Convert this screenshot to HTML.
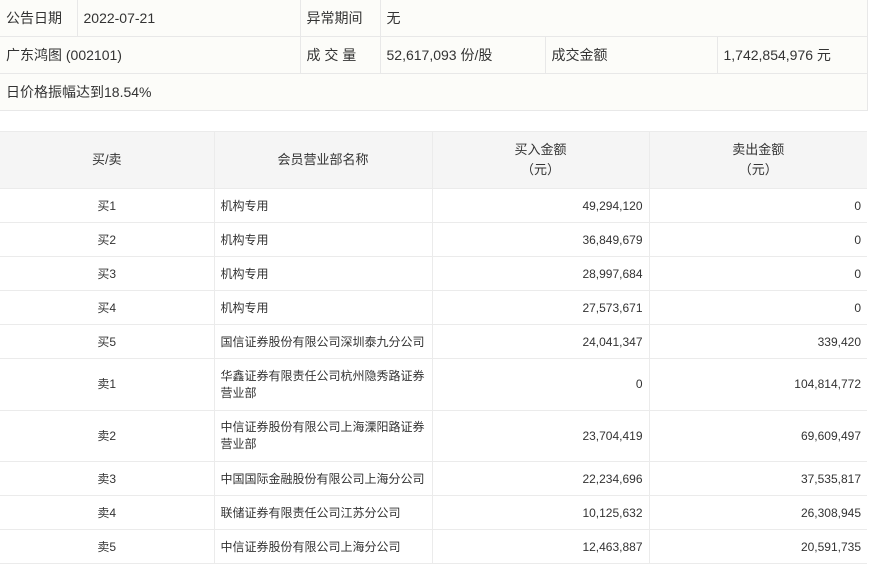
<!DOCTYPE html>
<html><head><meta charset="utf-8"><style>
body{margin:0;width:870px;height:565px;background:#fff;font-family:"Liberation Sans","Noto Sans CJK SC",sans-serif;color:#333;overflow:hidden;position:relative}
table{border-collapse:collapse;table-layout:fixed;position:absolute;left:0}
td{border:1px solid #e8e8e8;padding:0 6px;white-space:nowrap}
#t1{top:-1px;width:867px;background:#fcfcf9;font-size:14px}
#t1 td{height:36px}
#t1 td:first-child{border-left:none}
#t2{top:131px;width:867px;font-size:12px}
#t2 td{border-color:#ebebeb;padding:0 6px;height:33px}
#t2 tr.h td{background:#f5f5f5;height:56px;text-align:center;font-size:13px;line-height:20px}
#t2 tr.t td{height:50px;line-height:17px;white-space:normal}
#t2 tr.t1 td{height:51px}
#t2 td:first-child{border-left:none;text-align:center}
#t2 td:last-child{border-right:none}
.r{text-align:right}
</style></head><body>
<table id="t1">
<colgroup><col style="width:77px"><col style="width:223px"><col style="width:80px"><col style="width:165px"><col style="width:172px"><col style="width:150px"></colgroup>
<tr><td>公告日期</td><td>2022-07-21</td><td>异常期间</td><td colspan="3">无</td></tr>
<tr><td colspan="2">广东鸿图 (002101)</td><td>成 交 量</td><td>52,617,093 份/股</td><td>成交金额</td><td>1,742,854,976 元</td></tr>
<tr><td colspan="6">日价格振幅达到18.54%</td></tr>
</table>
<table id="t2">
<colgroup><col style="width:214px"><col style="width:218px"><col style="width:217px"><col style="width:218px"></colgroup>
<tr class="h"><td>买/卖</td><td>会员营业部名称</td><td>买入金额<br>（元）</td><td>卖出金额<br>（元）</td></tr>
<tr><td>买1</td><td>机构专用</td><td class="r">49,294,120</td><td class="r">0</td></tr>
<tr><td>买2</td><td>机构专用</td><td class="r">36,849,679</td><td class="r">0</td></tr>
<tr><td>买3</td><td>机构专用</td><td class="r">28,997,684</td><td class="r">0</td></tr>
<tr><td>买4</td><td>机构专用</td><td class="r">27,573,671</td><td class="r">0</td></tr>
<tr><td>买5</td><td>国信证券股份有限公司深圳泰九分公司</td><td class="r">24,041,347</td><td class="r">339,420</td></tr>
<tr class="t t1"><td>卖1</td><td>华鑫证券有限责任公司杭州隐秀路证券营业部</td><td class="r">0</td><td class="r">104,814,772</td></tr>
<tr class="t"><td>卖2</td><td>中信证券股份有限公司上海溧阳路证券营业部</td><td class="r">23,704,419</td><td class="r">69,609,497</td></tr>
<tr><td>卖3</td><td>中国国际金融股份有限公司上海分公司</td><td class="r">22,234,696</td><td class="r">37,535,817</td></tr>
<tr><td>卖4</td><td>联储证券有限责任公司江苏分公司</td><td class="r">10,125,632</td><td class="r">26,308,945</td></tr>
<tr><td>卖5</td><td>中信证券股份有限公司上海分公司</td><td class="r">12,463,887</td><td class="r">20,591,735</td></tr>
</table>
</body></html>
